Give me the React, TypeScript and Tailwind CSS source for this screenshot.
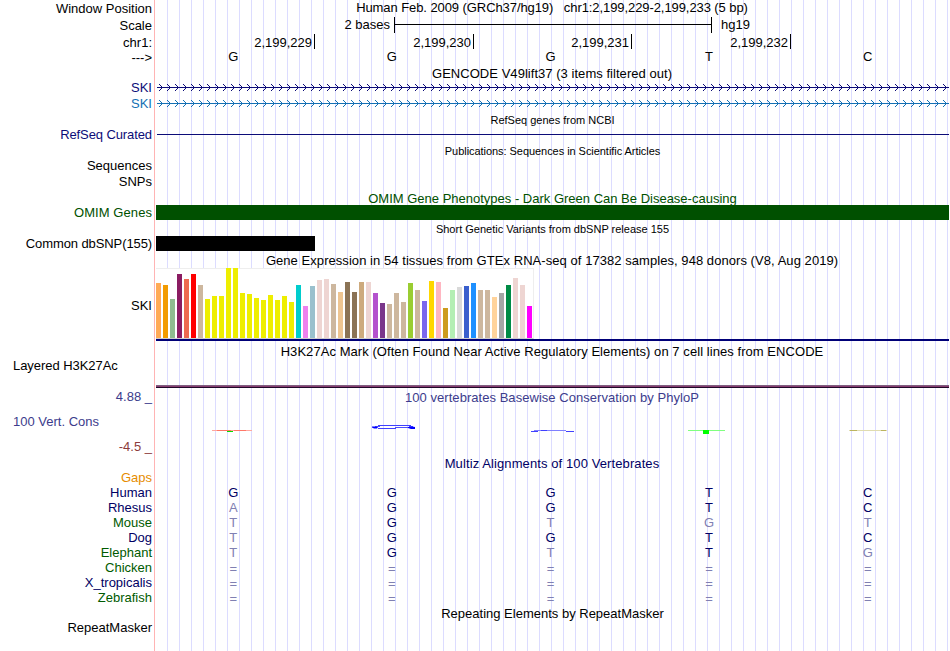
import clsx from "clsx";

interface LabelProps {
  text: string;
  className?: string;
}

const labels: LabelProps[] = [
  { text: "Window Position", className: "mt-px text-right" },
  { text: "Scale", className: "mt-0.5 text-right" },
  { text: "chr1:", className: "mt-0.5 text-right" },
  { text: "--->", className: "text-right" },
  { text: "SKI", className: "mt-[15px] text-right text-[#0c0c78]" },
  { text: "SKI", className: "mt-px text-right text-[#1470b4]" },
  { text: "RefSeq Curated", className: "mt-4 text-right tracking-[-0.1px] text-[#0c0c78]" },
  { text: "Sequences", className: "mt-4 text-right" },
  { text: "SNPs", className: "mt-px text-right" },
  { text: "OMIM Genes", className: "mt-4 text-right tracking-[0.07px] text-[#005000]" },
  { text: "Common dbSNP(155)", className: "mt-4 text-right tracking-[-0.1px]" },
  { text: "SKI", className: "mt-[47px] text-right" },
  { text: "Layered H3K27Ac", className: "mt-[45px] pl-[13px] tracking-[-0.05px]" },
  { text: "4.88 _", className: "mt-4 text-right text-[#3c3c8c]" },
  { text: "100 Vert. Cons", className: "mt-2.5 pl-[13px] text-[#3c3c8c]" },
  { text: "-4.5 _", className: "mt-2.5 text-right text-[#8c3c3c]" },
  { text: "Gaps", className: "mt-4 text-right text-[#e68c00]" },
  { text: "Human", className: "text-right text-[#000064]" },
  { text: "Rhesus", className: "text-right text-[#000064]" },
  { text: "Mouse", className: "text-right text-[#005a00]" },
  { text: "Dog", className: "text-right text-[#000064]" },
  { text: "Elephant", className: "text-right text-[#005a00]" },
  { text: "Chicken", className: "text-right text-[#005a00]" },
  { text: "X_tropicalis", className: "text-right text-[#000064]" },
  { text: "Zebrafish", className: "text-right text-[#005a00]" },
  { text: "RepeatMasker", className: "mt-[15px] text-right" },
];

// Lower-case entries are drawn faded, they differ from the human base
const alignments = ["GGGTC", "aGGTC", "tGtgt", "tGGTC", "tGtTg", "=====", "=====", "====="];

const tissues: [number, string][] = [
  [55, "#ffaa56"], [53, "#f29b00"], [39, "#8fbc8f"], [64, "#8b1c62"], [59, "#ee6a50"], [64, "#ff0000"],
  [53, "#cdb79e"], [39, "#eeee00"], [42, "#eeee00"], [42, "#eeee00"], [70, "#eeee00"], [70, "#eeee00"],
  [45, "#eeee00"], [44, "#eeee00"], [40, "#eeee00"], [38, "#eeee00"], [43, "#eeee00"], [38, "#eeee00"],
  [42, "#eeee00"], [36, "#eeee00"], [53, "#00cdcd"], [32, "#ee82ee"], [52, "#9ac0cd"], [58, "#eed5d2"],
  [59, "#eed5d2"], [54, "#cdb79e"], [46, "#eec591"], [56, "#8b7355"], [46, "#8b7355"], [56, "#cdaa7d"],
  [56, "#eed5d2"], [45, "#b452cd"], [35, "#7a378b"], [34, "#cdb79e"], [45, "#cdb79e"], [36, "#cdb79e"],
  [55, "#9acd32"], [48, "#cdb79e"], [37, "#7a67ee"], [57, "#ffd700"], [56, "#ffb6c1"], [30, "#cd9b1d"],
  [48, "#b4eeb4"], [51, "#d9d9d9"], [52, "#3a5fcd"], [55, "#1e90ff"], [48, "#cdb79e"], [48, "#cdb79e"],
  [41, "#ffd39b"], [45, "#a6a6a6"], [53, "#008b45"], [60, "#eed5d2"], [53, "#eed5d2"], [32, "#ff00ff"],
];

const Title = ({ text, className }: LabelProps) => (
  <div className={clsx("h-[15px] text-center whitespace-pre", className)}>{text}</div>
);

const Bases = ({ bases }: { bases: string }) => (
  <div className="-ml-px grid h-[15px] w-[793px] grid-cols-5 text-center">
    {bases.split("").map((base, i) => (
      <span
        key={i}
        className={clsx(base === "=" && "pt-px", (base === "=" || base !== base.toUpperCase()) && "text-[#8080b2]")}
      >
        {base.toUpperCase()}
      </span>
    ))}
  </div>
);

const GeneLine = ({ color, className }: { color: string; className?: string }) => (
  <svg className={clsx("block h-[7px] w-full", className)} shapeRendering="crispEdges">
    <rect x="2" y="3" width="792" height="1" fill={color} />
    {Array.from({ length: 99 }).map((_, i) => (
      <path
        key={i}
        transform={`translate(${4 + i * 8} 0)`}
        d="M0 0h1v1h-1zM1 1h1v1h-1zM2 2h1v1h-1zM3 3h1v1h-1zM2 4h1v1h-1zM1 5h1v1h-1zM0 6h1v1h-1z"
        fill={color}
      />
    ))}
  </svg>
);

const ScaleBar = () => (
  <div className="mt-0.5 flex h-[15px]">
    <div className="w-[235px] text-right">2 bases</div>
    <div className="ml-[4px] h-4 w-[318px] border-x border-black pt-[7px]">
      <div className="h-px w-full bg-black" />
    </div>
    <div className="ml-[9px]">hg19</div>
  </div>
);

const tick = "border-r border-black pt-px pr-[2px] text-right";

const Positions = () => (
  <div className="mt-0.5 flex h-[15px]">
    <div className={clsx("w-[160px]", tick)}>2,199,229</div>
    <div className={clsx("w-[159px]", tick)}>2,199,230</div>
    <div className={clsx("w-[158px]", tick)}>2,199,231</div>
    <div className={clsx("w-[159px]", tick)}>2,199,232</div>
  </div>
);

const Expression = () => (
  <div className="ml-px border-b-2 border-[#000078]">
    <div className="flex h-[71px] w-[378px] items-end gap-[2px] border-r border-b border-r-[#eeeeee] border-b-[#cccccc] bg-white shadow-[inset_0_1px_0_#eeeeee]">
      {tissues.map(([height, color], i) => (
        <div key={i} className="w-[5px] shrink-0" style={{ height, backgroundColor: color }} />
      ))}
    </div>
  </div>
);

// Per-base conservation glyphs, squashed flat because the scores are near zero
const Conservation = () => (
  <svg className="mt-[17px] block h-3 w-full" fill="none">
    <path d="M57 8.5h40" stroke="#ffa8a0" />
    <path d="M62 8.5h14M79 8.5h12" stroke="#ff7868" />
    <path d="M72 9.5h6" stroke="#00e000" />
    <path d="M223 3.5h33M223 6.5h18" stroke="#4040ff" />
    <path d="M240 5.5h13M220 4.5h5M254 4.5h4" stroke="#5050ff" />
    <path d="M217 4.5h4l2 .5-1 1.5h-3l-2-1zM253 5l4-.5 3 .5v2h-4l-3-1z" fill="#0000ff" />
    <path d="M379 8.5h8M392 8.5h19" stroke="#8080ff" />
    <path d="M376 9.5h7M386 8.5h6M411 9.5h8" stroke="#4040ff" />
    <path d="M533 8.5h37" stroke="#80ff80" />
    <path d="M548 8h6v4h-6z" fill="#00ff00" />
    <path d="M694 8.5h38" stroke="#e0dcb0" />
    <path d="M695 8.5h7M726 8.5h5" stroke="#bcb460" />
  </svg>
);

export default function App() {
  return (
    <div className="flex h-[651px] w-[950px] overflow-hidden bg-white font-['Liberation_Sans',sans-serif] text-[13px] leading-[15px] text-black">
      <div className="w-[155px] shrink-0 border-r border-[#ffb4b4]">
        {labels.map(({ text, className }, i) => (
          <div key={i} className={clsx("h-[15px] pr-[2px] whitespace-pre", className)}>
            {text}
          </div>
        ))}
      </div>

      <div className="w-[794px] bg-[repeating-linear-gradient(to_right,#dcdcff_0px,#dcdcff_1px,transparent_1px,transparent_12px)] bg-[position:12px_0] bg-no-repeat">
        <Title text="Human Feb. 2009 (GRCh37/hg19)   chr1:2,199,229-2,199,233 (5 bp)" className="tracking-[-0.08px]" />
        <ScaleBar />
        <Positions />
        <Bases bases="GGGTC" />
        <Title text="GENCODE V49lift37 (3 items filtered out)" className="mt-[2px] tracking-[0.04px]" />
        <GeneLine color="#0c0c78" className="mt-[3px]" />
        <GeneLine color="#1470b4" className="mt-[9px]" />
        <Title text="RefSeq genes from NCBI" className="mt-[6px] pl-px text-[11px]" />
        <div className="mt-[6px] ml-[2px] h-px bg-[#0c0c78]" />
        <Title
          text="Publications: Sequences in Scientific Articles"
          className="mt-[9px] pl-px text-[11px] tracking-[-0.05px]"
        />
        <Title
          text="OMIM Gene Phenotypes - Dark Green Can Be Disease-causing"
          className="mt-[32px] pl-px text-[#005000]"
        />
        <div className="-mt-px ml-px h-[15px] bg-[#005000]" />
        <Title text="Short Genetic Variants from dbSNP release 155" className="mt-[2px] pl-px text-[11px]" />
        <div className="-mt-px ml-px h-[15px] w-[159px] bg-black" />
        <Title
          text="Gene Expression in 54 tissues from GTEx RNA-seq of 17382 samples, 948 donors (V8, Aug 2019)"
          className="mt-[2px] tracking-[0.055px]"
        />
        <Expression />
        <Title
          text="H3K27Ac Mark (Often Found Near Active Regulatory Elements) on 7 cell lines from ENCODE"
          className="mt-[3px] tracking-[0.06px]"
        />
        <div className="mt-[26px] ml-px h-[3px] border-t border-b border-t-[#806080] border-b-[#200828] bg-[#883c70]" />
        <Title text="100 vertebrates Basewise Conservation by PhyloP" className="mt-[2px] tracking-[0.04px] text-[#3c3c8c]" />
        <Conservation />
        <Title text="Multiz Alignments of 100 Vertebrates" className="mt-[22px] tracking-[0.1px] text-[#000064]" />
        <div className="mt-[14px] text-[#000064]">
          {alignments.map((bases, i) => (
            <Bases key={i} bases={bases} />
          ))}
        </div>
        <Title text="Repeating Elements by RepeatMasker" className="mt-px pl-px" />
      </div>
    </div>
  );
}
